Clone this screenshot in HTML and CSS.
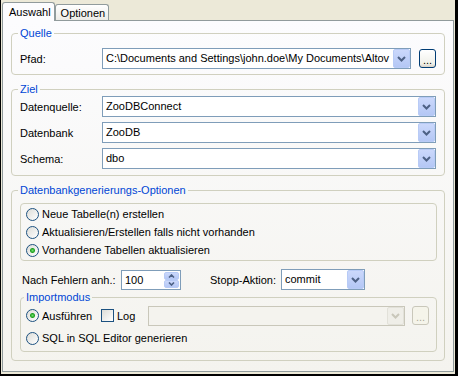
FILE: index.html
```html
<!DOCTYPE html>
<html>
  <head>
    <title>Auswahl</title>
    <link rel="stylesheet" href="styles.css">
  </head>
  <body>
    <div class="dialog">
      <div class="tabs">
        <span class="tab selected">Auswahl</span>
        <span class="tab">Optionen</span>
      </div>

      <div class="panel">

        <fieldset class="group source">
          <legend>Quelle</legend>
          <div class="row">
            <span class="label">Pfad:</span>
            <div class="combo">
              <span class="value">C:\Documents and Settings\john.doe\My Documents\Altov</span>
              <span class="drop"><svg width="9" height="6" viewBox="0 0 9 6"><path d="M1 1l3.5 3.5L8 1" /></svg></span>
            </div>
            <span class="browse">...</span>
          </div>
        </fieldset>

        <fieldset class="group target">
          <legend>Ziel</legend>
          <div class="row">
            <span class="label">Datenquelle:</span>
            <div class="combo">
              <span class="value">ZooDBConnect</span>
              <span class="drop"><svg width="9" height="6" viewBox="0 0 9 6"><path d="M1 1l3.5 3.5L8 1" /></svg></span>
            </div>
          </div>
          <div class="row">
            <span class="label">Datenbank</span>
            <div class="combo">
              <span class="value">ZooDB</span>
              <span class="drop"><svg width="9" height="6" viewBox="0 0 9 6"><path d="M1 1l3.5 3.5L8 1" /></svg></span>
            </div>
          </div>
          <div class="row">
            <span class="label">Schema:</span>
            <div class="combo">
              <span class="value">dbo</span>
              <span class="drop"><svg width="9" height="6" viewBox="0 0 9 6"><path d="M1 1l3.5 3.5L8 1" /></svg></span>
            </div>
          </div>
        </fieldset>

        <fieldset class="group generate">
          <legend>Datenbankgenerierungs-Optionen</legend>

          <div class="box modes">
            <label class="option"><span class="radio"></span>Neue Tabelle(n) erstellen</label>
            <label class="option"><span class="radio"></span>Aktualisieren/Erstellen falls nicht vorhanden</label>
            <label class="option"><span class="radio checked"></span>Vorhandene Tabellen aktualisieren</label>
          </div>

          <div class="errors">
            <span class="err-label">Nach Fehlern anh.:</span>
            <div class="spin">
              <span class="value">100</span>
              <span class="spin-buttons">
                <span class="spin-btn"><svg width="7" height="4" viewBox="0 0 7 4"><path d="M1 3.5l2.5-2.5L6 3.5" /></svg></span>
                <span class="spin-btn"><svg width="7" height="4" viewBox="0 0 7 4"><path d="M1 0.5l2.5 2.5L6 0.5" /></svg></span>
              </span>
            </div>
            <span class="stop-label">Stopp-Aktion:</span>
            <div class="combo stop">
              <span class="value">commit</span>
              <span class="drop"><svg width="9" height="6" viewBox="0 0 9 6"><path d="M1 1l3.5 3.5L8 1" /></svg></span>
            </div>
          </div>

          <fieldset class="group import">
            <legend>Importmodus</legend>
            <div class="import-row">
              <label class="option run"><span class="radio checked"></span>Ausführen</label>
              <label class="option log"><span class="check"></span>Log</label>
              <div class="combo disabled">
                <span class="value"></span>
                <span class="drop"><svg width="9" height="6" viewBox="0 0 9 6"><path d="M1 1l3.5 3.5L8 1" /></svg></span>
              </div>
              <span class="browse disabled">...</span>
            </div>
            <label class="option"><span class="radio"></span>SQL in SQL Editor generieren</label>
          </fieldset>
        </fieldset>

      </div>
    </div>
  </body>
</html>
```

FILE: styles.css
```css
* {
    box-sizing: border-box;
}
body {
    background: #ece9d8;
    color: #000;
    font-family: "Liberation Sans", Arial, sans-serif;
    font-size: 11px;
    margin: 0;
}
.dialog {
    border-bottom: 2px solid #000;
    border-left: 1px solid #000;
    border-right: 3px solid #000;
    display: flex;
    flex-direction: column;
    height: 376px;
    padding: 2px 1px 2px 1px;
    width: 458px;
}

/* tabs */
.tabs {
    align-items: flex-end;
    display: flex;
    height: 18px;
}
.tab {
    background: linear-gradient(#fff, #ecebe6);
    border: 1px solid #919b9c;
    border-bottom: none;
    border-radius: 3px 3px 0 0;
    height: 16px;
    line-height: 16px;
    padding: 0 3px 0 5px;
}
.tab.selected {
    background: #fcfcfe;
    height: 19px;
    line-height: 18px;
    margin-bottom: -1px;
    padding: 0 3px 0 6px;
    position: relative;
    z-index: 1;
}
.panel {
    background: linear-gradient(#fcfcfe, #f4f3ee);
    border: 1px solid #919b9c;
    flex: 1;
    padding: 0 8px;
}

/* group boxes */
.group {
    border: 1px solid #d0d0bf;
    border-radius: 4px;
    margin: 0;
    min-width: 0;
    padding: 0 8px;
}
.group legend {
    color: #0046d5;
    line-height: 13px;
    margin-left: -2px;
    padding: 0 2px;
}
.source {
    margin-top: 6px;
    padding-bottom: 5px;
    padding-top: 8px;
}
.target {
    display: flex;
    flex-direction: column;
    gap: 5px;
    margin-top: 8px;
    padding-bottom: 6px;
}
.generate {
    margin-top: 8px;
    padding: 6px 7px 8px 8px;
}
.box {
    border: 1px solid #d0d0bf;
    border-radius: 4px;
}
.modes {
    padding: 1px 5px;
}

.row {
    align-items: center;
    display: flex;
}
.label {
    flex: none;
    width: 82px;
}

/* combo boxes */
.combo {
    background: #fff;
    border: 1px solid #7f9db9;
    display: flex;
    flex: 1;
    height: 21px;
    min-width: 0;
}
.combo .value {
    flex: 1;
    line-height: 19px;
    min-width: 0;
    padding-left: 3px;
    white-space: nowrap;
}
.drop {
    align-items: center;
    background: linear-gradient(#cbd8fb, #b4c7f5);
    border: 1px solid #b8cbf6;
    border-radius: 2px;
    display: flex;
    flex: none;
    justify-content: center;
    width: 17px;
}
.drop path,
.spin-btn path {
    fill: none;
    stroke: #4d6185;
    stroke-width: 2;
}
.combo.disabled {
    background: #f4f3ee;
    border-color: #c9c7ba;
}
.combo.disabled .drop {
    background: #efeee8;
    border-color: #e2e1d9;
}
.combo.disabled .drop path {
    stroke: #c9c7ba;
}
.browse {
    background: linear-gradient(#fff, #f0f0ea 80%, #d8d2c6);
    border: 1px solid #003c74;
    border-radius: 3px;
    flex: none;
    height: 19px;
    line-height: 12px;
    margin-left: 8px;
    padding-top: 4px;
    text-align: center;
    width: 17px;
}
.browse.disabled {
    background: #f5f4ea;
    border-color: #c9c7ba;
    color: #aca899;
    margin-left: 7px;
}

/* radio buttons and check boxes */
.option {
    align-items: center;
    display: flex;
    gap: 3px;
    height: 18px;
}
.radio,
.check {
    background: linear-gradient(135deg, #dcdcd7, #fff);
    border: 1px solid #1c5180;
    flex: none;
    height: 13px;
    width: 13px;
}
.radio {
    border-radius: 50%;
}
.radio.checked {
    background: radial-gradient(circle, #6fe06f 0, #21a121 2px, transparent 3px), linear-gradient(135deg, #dcdcd7, #fff);
}

/* error row */
.errors {
    align-items: center;
    display: flex;
    height: 21px;
    margin-top: 8px;
}
.err-label {
    margin-left: 2px;
    width: 99px;
}
.spin {
    background: #fff;
    border: 1px solid #7f9db9;
    display: flex;
    height: 20px;
    padding: 1px;
    width: 60px;
}
.spin .value {
    flex: 1;
    line-height: 16px;
    padding-left: 2px;
}
.spin-buttons {
    display: flex;
    flex-direction: column;
    width: 15px;
}
.spin-btn {
    align-items: center;
    background: linear-gradient(#cbd8fb, #b4c7f5);
    border: 1px solid #b8cbf6;
    border-radius: 2px;
    display: flex;
    flex: 1;
    justify-content: center;
}
.spin-btn path {
    stroke-width: 1.6;
}
.stop-label {
    margin-left: 29px;
    width: 71px;
}
.combo.stop {
    flex: none;
    width: 84px;
}

/* import mode */
.import {
    margin-top: 1px;
    padding: 1px 7px 4px 5px;
}
.import-row {
    align-items: center;
    display: flex;
    height: 21px;
    margin-bottom: 3px;
}
.import-row .combo {
    height: 20px;
}
.option.run {
    width: 75px;
}
.option.log {
    width: 47px;
}
.check {
    border-radius: 0;
}
```
